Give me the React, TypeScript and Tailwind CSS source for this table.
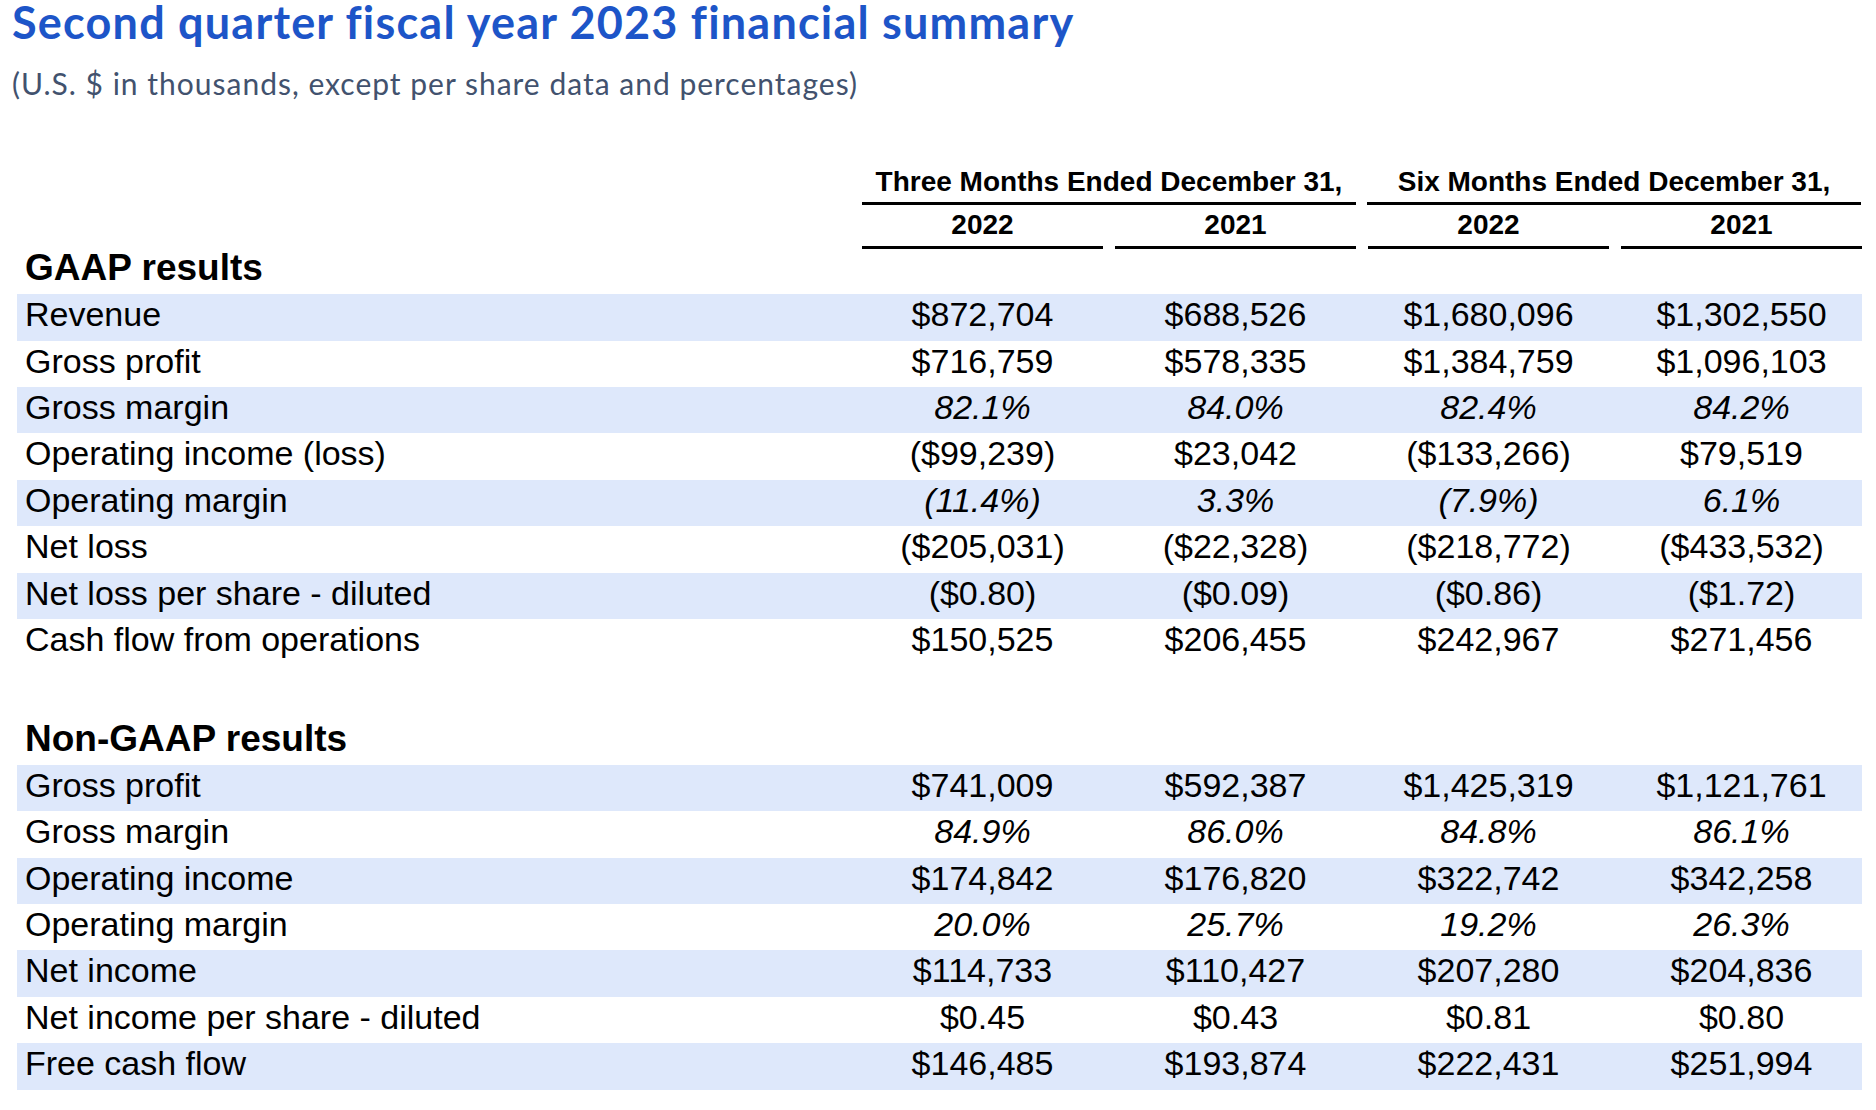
type Row = {
  label: string
  values: string[]
  italic?: boolean
}

const GAAP_ROWS: Row[] = [
  { label: 'Revenue', values: ['$872,704', '$688,526', '$1,680,096', '$1,302,550'] },
  { label: 'Gross profit', values: ['$716,759', '$578,335', '$1,384,759', '$1,096,103'] },
  { label: 'Gross margin', values: ['82.1%', '84.0%', '82.4%', '84.2%'], italic: true },
  { label: 'Operating income (loss)', values: ['($99,239)', '$23,042', '($133,266)', '$79,519'] },
  { label: 'Operating margin', values: ['(11.4%)', '3.3%', '(7.9%)', '6.1%'], italic: true },
  { label: 'Net loss', values: ['($205,031)', '($22,328)', '($218,772)', '($433,532)'] },
  { label: 'Net loss per share - diluted', values: ['($0.80)', '($0.09)', '($0.86)', '($1.72)'] },
  { label: 'Cash flow from operations', values: ['$150,525', '$206,455', '$242,967', '$271,456'] },
]

const NON_GAAP_ROWS: Row[] = [
  { label: 'Gross profit', values: ['$741,009', '$592,387', '$1,425,319', '$1,121,761'] },
  { label: 'Gross margin', values: ['84.9%', '86.0%', '84.8%', '86.1%'], italic: true },
  { label: 'Operating income', values: ['$174,842', '$176,820', '$322,742', '$342,258'] },
  { label: 'Operating margin', values: ['20.0%', '25.7%', '19.2%', '26.3%'], italic: true },
  { label: 'Net income', values: ['$114,733', '$110,427', '$207,280', '$204,836'] },
  { label: 'Net income per share - diluted', values: ['$0.45', '$0.43', '$0.81', '$0.80'] },
  { label: 'Free cash flow', values: ['$146,485', '$193,874', '$222,431', '$251,994'] },
]

const YEARS = ['2022', '2021', '2022', '2021']

function DataRow({ row, shaded }: { row: Row; shaded: boolean }) {
  return (
    <div className={`flex w-[1845px] h-[46.4px] leading-[41px] text-[34px] ${shaded ? 'bg-[#dee8fb]' : ''}`}>
      <div className="w-[845px] shrink-0 pl-2 whitespace-nowrap">{row.label}</div>
      <div className="flex gap-3">
        {row.values.map((value, i) => (
          <div key={i} className={`w-[241px] text-center whitespace-nowrap ${row.italic ? 'italic' : ''}`}>
            {value}
          </div>
        ))}
      </div>
    </div>
  )
}

function SectionHeading({ children }: { children: string }) {
  return (
    <div className="h-[45px] pl-2 text-[37px] leading-[37px] font-bold whitespace-nowrap">{children}</div>
  )
}

export default function App() {
  return (
    <div className="min-h-[1110px] w-[1876px] bg-white">
      <div className="pl-[12px]">
        <h1 className="font-['Lato',sans-serif] text-[45px] leading-[44px] tracking-[1.2px] font-bold text-[#1d55c8] whitespace-nowrap">
          Second quarter fiscal year 2023 financial summary
        </h1>
        <p className="mt-[24.3px] font-['Lato',sans-serif] text-[30px] leading-[30px] tracking-[1px] text-[#42526e] whitespace-nowrap">
          (U.S. $ in thousands, except per share data and percentages)
        </p>
      </div>

      <div className="mt-[67.7px] pl-[17px] font-['Liberation_Sans',Arial,sans-serif] text-black">
        {/* column headers */}
        <div className="flex">
          <div className="w-[845px] shrink-0" />
          <div className="flex gap-[11px] text-[28px] leading-[32px] font-bold">
            <div className="w-[494px]">
              <div className="pb-[4.5px] text-center whitespace-nowrap">Three Months Ended December 31,</div>
              <div className="h-[3px] bg-black" />
            </div>
            <div className="w-[494px]">
              <div className="pb-[4.5px] text-center whitespace-nowrap">Six Months Ended December 31,</div>
              <div className="h-[3px] bg-black" />
            </div>
          </div>
        </div>
        <div className="flex pt-[3.8px]">
          <div className="w-[845px] shrink-0" />
          <div className="flex gap-3 text-[28px] leading-[32px] font-bold">
            {YEARS.map((year, i) => (
              <div key={i} className="w-[241px]">
                <div className="pb-[5px] text-center">{year}</div>
                <div className="h-[3px] bg-black" />
              </div>
            ))}
          </div>
        </div>

        <SectionHeading>GAAP results</SectionHeading>
        {GAAP_ROWS.map((row, i) => (
          <DataRow key={row.label} row={row} shaded={i % 2 === 0} />
        ))}

        <div className="h-[54.5px]" />

        <SectionHeading>Non-GAAP results</SectionHeading>
        {NON_GAAP_ROWS.map((row, i) => (
          <DataRow key={row.label} row={row} shaded={i % 2 === 0} />
        ))}
      </div>
    </div>
  )
}
